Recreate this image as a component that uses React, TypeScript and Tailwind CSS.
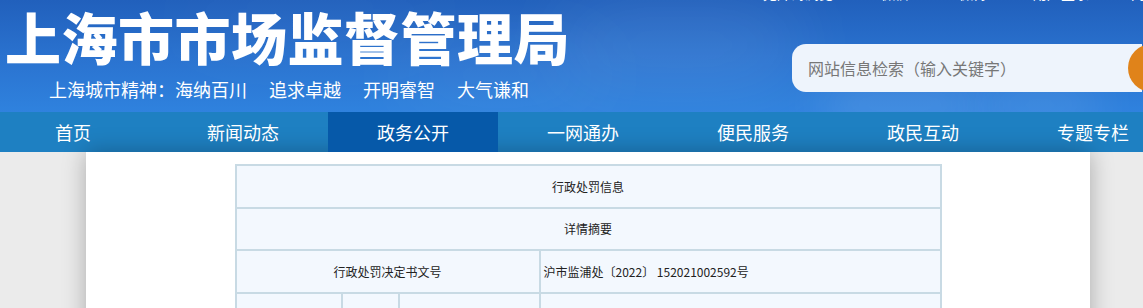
import React from "react";

const navItems = ["首页", "新闻动态", "政务公开", "一网通办", "便民服务", "政民互动", "专题专栏"];

export default function App() {
  const cell = "bg-[#f3f8fe] flex items-center text-[12px] text-[#222] leading-none";
  return (
    <div className="w-[1143px] h-[308px] overflow-hidden bg-[#ebebeb] font-['Noto_Sans_CJK_SC','Noto_Sans',sans-serif]">
      {/* Header */}
      <header className="relative h-[112px] overflow-hidden bg-gradient-to-b from-[#2160bc] via-[#2a72cf] to-[#2f82de]">
        {/* soft clouds */}
        <div className="absolute left-[560px] top-[10px] w-[240px] h-[70px] rounded-full bg-white/10 blur-2xl" />
        <div className="absolute left-[400px] top-[55px] w-[200px] h-[40px] rounded-full bg-white/10 blur-2xl" />
        <div className="absolute left-[820px] top-[85px] w-[160px] h-[40px] rounded-full bg-white/15 blur-xl" />
        <div className="absolute left-[980px] top-[90px] w-[120px] h-[30px] rounded-full bg-white/15 blur-xl" />
        <div className="absolute left-[180px] top-[0px] w-[260px] h-[40px] rounded-full bg-white/5 blur-2xl" />

        <div className="relative flex">
          <div className="w-[758px] pl-[5px] shrink-0">
            <h1 className="mt-[8px] text-[56px] leading-[56px] font-black text-white whitespace-nowrap tracking-[0.5px]">
              上海市市场监督管理局
            </h1>
            <p className="mt-[16px] text-[18px] leading-[18px] text-white whitespace-nowrap pl-[44px]">
              <span>上海城市精神：海纳百川</span>
              <span className="ml-[22px]">追求卓越</span>
              <span className="ml-[22px]">开明睿智</span>
              <span className="ml-[22px]">大气谦和</span>
            </p>
          </div>
          <div className="flex-1 flex flex-col">
            <div className="flex h-[14px] mt-[-14px] text-[14px] leading-[14px] text-white whitespace-nowrap">
              <span className="ml-[5px]">无障碍浏览</span>
              <span className="ml-[48px]">微信</span>
              <span className="ml-[50px]">微博</span>
              <span className="ml-[46px]">用户登录</span>
              <span className="ml-[42px]">网站导航</span>
            </div>
            <div className="flex items-center mt-[44px] ml-[34px]">
              <div className="w-[350px] h-[48px] shrink-0 rounded-l-[14px] bg-[#eef4fc] flex items-center pl-[16px] text-[16px] text-[#777] whitespace-nowrap">
                网站信息检索（输入关键字）
              </div>
              <div className="w-[60px] h-[48px] shrink-0 rounded-full bg-[#e0831a] ml-[-14px]" />
            </div>
          </div>
        </div>
      </header>

      {/* Nav */}
      <nav className="h-[40px] bg-[#1e80c2] overflow-hidden">
        <ul className="flex ml-[-12px] h-full">
          {navItems.map((n) => (
            <li
              key={n}
              className={
                n === "政务公开"
                  ? "w-[170px] shrink-0 h-full flex items-center justify-center text-[18px] text-white bg-[#0659a9]"
                  : "w-[170px] shrink-0 h-full flex items-center justify-center text-[18px] text-white"
              }
            >
              {n}
            </li>
          ))}
        </ul>
      </nav>

      {/* Body */}
      <main className="ml-[86px] w-[1004px] h-[400px] bg-white shadow-[0_0_22px_rgba(0,0,0,0.28)] pt-[12px]">
        <div className="mx-auto w-[707px] grid grid-cols-[104px_55px_139px_399px] gap-[2px] p-[2px] bg-[#c8dae4]">
          <div className={`${cell} col-span-4 h-[41px] justify-center`}>行政处罚信息</div>
          <div className={`${cell} col-span-4 h-[40px] justify-center`}>详情摘要</div>
          <div className={`${cell} col-span-3 h-[41px] justify-center`}>行政处罚决定书文号</div>
          <div className={`${cell} h-[41px] pl-[3px]`}>沪市监浦处〔2022〕 152021002592号</div>

          <div className={`${cell} row-span-3 justify-center`}>当事人</div>
          <div className={`${cell} row-span-3 justify-center`}>法人及其他组织</div>
          <div className={`${cell} h-[40px] justify-center`}>名称</div>
          <div className={`${cell} h-[40px] pl-[3px]`}>上海丽与铂美容有限公司</div>
          <div className={`${cell} h-[41px] justify-center`}>统一社会信用代码</div>
          <div className={`${cell} h-[41px] pl-[3px]`}>91310115MA1K4XXXXX</div>
          <div className={`${cell} h-[41px] justify-center`}>法定代表人</div>
          <div className={`${cell} h-[41px] pl-[3px]`}></div>
        </div>
      </main>
    </div>
  );
}
